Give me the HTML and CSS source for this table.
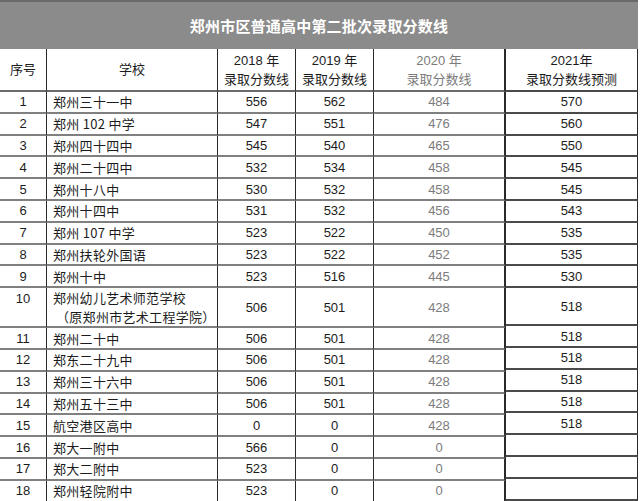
FILE: index.html
```html
<!DOCTYPE html>
<html lang="zh-CN">
<head>
<meta charset="utf-8">
<title>郑州市区普通高中第二批次录取分数线</title>
<link rel="stylesheet" href="styles.css">
</head>
<body>
<div class="sheet">
  <div class="title">郑州市区普通高中第二批次录取分数线</div>
  <div class="tables">
    <table class="main">
      <colgroup>
        <col class="c-no"><col class="c-name"><col class="c-y"><col class="c-y"><col class="c-y20">
      </colgroup>
      <thead>
        <tr class="head">
          <th>序号</th>
          <th>学校</th>
          <th>2018 年<br>录取分数线</th>
          <th>2019 年<br>录取分数线</th>
          <th class="muted">2020 年<br>录取分数线</th>
        </tr>
      </thead>
      <tbody>
        <tr><td>1</td><td class="name">郑州三十一中</td><td>556</td><td>562</td><td class="muted">484</td></tr>
        <tr><td>2</td><td class="name">郑州 102 中学</td><td>547</td><td>551</td><td class="muted">476</td></tr>
        <tr><td>3</td><td class="name">郑州四十四中</td><td>545</td><td>540</td><td class="muted">465</td></tr>
        <tr><td>4</td><td class="name">郑州二十四中</td><td>532</td><td>534</td><td class="muted">458</td></tr>
        <tr><td>5</td><td class="name">郑州十八中</td><td>530</td><td>532</td><td class="muted">458</td></tr>
        <tr><td>6</td><td class="name">郑州十四中</td><td>531</td><td>532</td><td class="muted">456</td></tr>
        <tr><td>7</td><td class="name">郑州 107 中学</td><td>523</td><td>522</td><td class="muted">450</td></tr>
        <tr><td>8</td><td class="name">郑州扶轮外国语</td><td>523</td><td>522</td><td class="muted">452</td></tr>
        <tr><td>9</td><td class="name">郑州十中</td><td>523</td><td>516</td><td class="muted">445</td></tr>
        <tr class="tall"><td class="top">10</td><td class="name">郑州幼儿艺术师范学校<br><span class="sub">（原郑州市艺术工程学院）</span></td><td>506</td><td>501</td><td class="muted">428</td></tr>
        <tr><td>11</td><td class="name">郑州二十中</td><td>506</td><td>501</td><td class="muted">428</td></tr>
        <tr><td>12</td><td class="name">郑东二十九中</td><td>506</td><td>501</td><td class="muted">428</td></tr>
        <tr><td>13</td><td class="name">郑州三十六中</td><td>506</td><td>501</td><td class="muted">428</td></tr>
        <tr><td>14</td><td class="name">郑州五十三中</td><td>506</td><td>501</td><td class="muted">428</td></tr>
        <tr><td>15</td><td class="name">航空港区高中</td><td>0</td><td>0</td><td class="muted">428</td></tr>
        <tr><td>16</td><td class="name">郑大一附中</td><td>566</td><td>0</td><td class="muted">0</td></tr>
        <tr><td>17</td><td class="name">郑大二附中</td><td>523</td><td>0</td><td class="muted">0</td></tr>
        <tr><td>18</td><td class="name">郑州轻院附中</td><td>523</td><td>0</td><td class="muted">0</td></tr>
      </tbody>
    </table>
    <table class="side">
      <thead>
        <tr class="head"><th>2021年<br>录取分数线预测</th></tr>
      </thead>
      <tbody>
        <tr><td>570</td></tr>
        <tr><td>560</td></tr>
        <tr><td>550</td></tr>
        <tr><td>545</td></tr>
        <tr><td>545</td></tr>
        <tr><td>543</td></tr>
        <tr><td>535</td></tr>
        <tr><td>535</td></tr>
        <tr><td>530</td></tr>
        <tr class="tall"><td>518</td></tr>
        <tr><td>518</td></tr>
        <tr><td>518</td></tr>
        <tr><td>518</td></tr>
        <tr><td>518</td></tr>
        <tr><td>518</td></tr>
        <tr><td></td></tr>
        <tr><td></td></tr>
        <tr><td></td></tr>
      </tbody>
    </table>
  </div>
</div>
</body>
</html>
```
FILE: styles.css
```css
html, body {
  margin: 0;
  padding: 0;
  background: #ffffff;
}

body {
  font-family: "Liberation Sans", "Noto Sans CJK SC", sans-serif;
  font-size: 13px;
  color: #1c1c1c;
}

.sheet {
  width: 638px;
}

.title {
  height: 47px;
  border-top: 2px solid #6a6a6a;
  background: #8b8b8b;
  color: #ffffff;
  font-family: "Noto Sans CJK SC", sans-serif;
  font-weight: bold;
  font-size: 15px;
  line-height: 47px;
  text-align: center;
  letter-spacing: 0.2px;
}

.tables {
  display: flex;
  align-items: flex-start;
}

table {
  border-collapse: separate;
  border-spacing: 0;
  table-layout: fixed;
}

.main {
  width: 505px;
}

.side {
  width: 133px;
}

.c-no { width: 47px; }
.c-name { width: 171px; }
.c-y { width: 78px; }
.c-y20 { width: 131px; }

th, td {
  padding: 0;
  text-align: center;
  vertical-align: middle;
  font-weight: normal;
  line-height: 19px;
  white-space: nowrap;
  overflow: hidden;
  box-sizing: border-box;
}

.main th, .main td {
  border-right: 1px solid #2a2a2a;
  border-bottom: 2px solid #808080;
}

.main .head th {
  border-bottom: 2px solid #6a6a6a;
}

.side th, .side td {
  border-left: 1px solid #2a2a2a;
  border-right: 1px solid #2a2a2a;
  border-bottom: 2px solid #4a4a4a;
}

tr {
  height: 21.8px;
}

tr.head {
  height: 43px;
}

tr.tall {
  height: 38px;
}

td.name {
  text-align: left;
  padding-left: 6px;
  font-family: "Noto Sans CJK SC", sans-serif;
  font-size: 13px;
  letter-spacing: 0.3px;
}

td.name .sub {
  padding-left: 3px;
}

td.top {
  vertical-align: top;
  padding-top: 1px;
}

.head th {
  font-family: "Liberation Sans", "Noto Sans CJK SC", sans-serif;
  font-size: 13px;
}

.muted {
  color: #7c7c7c;
}
```
